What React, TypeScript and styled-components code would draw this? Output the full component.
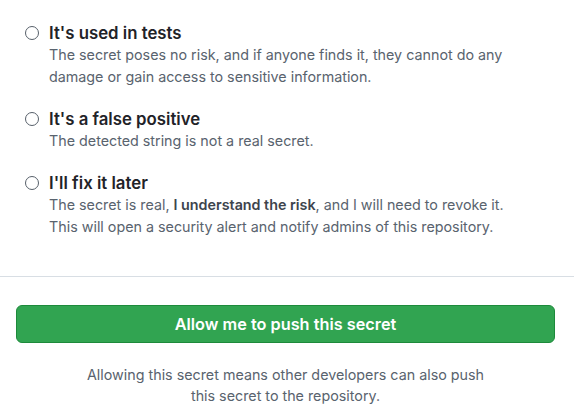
import React from "react";
import styled, { createGlobalStyle } from "styled-components";

const GlobalStyle = createGlobalStyle`
  html, body {
    margin: 0;
    padding: 0;
    background: #ffffff;
  }
  body {
    font-family: Inter, "Noto Sans", "Liberation Sans", sans-serif;
    -webkit-font-smoothing: antialiased;
  }
`;

const Page = styled.div`
  width: 574px;
  height: 414px;
  display: flex;
  flex-direction: column;
  overflow: hidden;
`;

const Options = styled.div`
  display: flex;
  flex-direction: column;
  gap: 20px;
  padding: 22px 0 0 25px;
  height: 276px;
  box-sizing: border-box;
`;

const Option = styled.label`
  display: flex;
  flex-direction: row;
  align-items: flex-start;
  gap: 10px;
  cursor: pointer;
`;

const Radio = styled.span`
  flex: none;
  width: 14px;
  height: 14px;
  margin-top: 4px;
  border: 1.3px solid #57606a;
  border-radius: 50%;
  box-sizing: border-box;
  background: #ffffff;
`;

const OptionText = styled.div`
  display: flex;
  flex-direction: column;
  max-width: 480px;
`;

const Title = styled.span`
  font-size: 16.8px;
  line-height: 22px;
  font-weight: 600;
  color: #1f2328;
`;

const Description = styled.span`
  font-size: 14.3px;
  line-height: 22px;
  color: #59636e;

  strong {
    font-weight: 600;
    color: #3d444d;
  }
`;

const Divider = styled.hr`
  margin: 0;
  border: 0;
  border-top: 1px solid #d8dee4;
`;

const Actions = styled.div`
  display: flex;
  flex-direction: column;
  align-items: center;
  padding: 28px 19px 0 16px;
`;

const PushButton = styled.button`
  width: 100%;
  height: 38px;
  border: 1px solid #1d8a3b;
  border-radius: 6px;
  background: #31a451;
  color: #ffffff;
  font-family: inherit;
  font-size: 16.3px;
  font-weight: 600;
  cursor: pointer;
`;

const Note = styled.p`
  margin: 21px 0 0;
  max-width: 415px;
  text-align: center;
  font-size: 14.3px;
  line-height: 21px;
  color: #59636e;
`;

interface Choice {
  title: string;
  description: React.ReactNode;
}

const choices: Choice[] = [
  {
    title: "It's used in tests",
    description:
      "The secret poses no risk, and if anyone finds it, they cannot do any damage or gain access to sensitive information.",
  },
  {
    title: "It's a false positive",
    description: "The detected string is not a real secret.",
  },
  {
    title: "I'll fix it later",
    description: (
      <>
        The secret is real, <strong>I understand the risk</strong>, and I will need to revoke it. This will open a
        security alert and notify admins of this repository.
      </>
    ),
  },
];

export default function App(): JSX.Element {
  return (
    <Page>
      <GlobalStyle />
      <Options>
        {choices.map((choice) => (
          <Option key={choice.title}>
            <Radio />
            <OptionText>
              <Title>{choice.title}</Title>
              <Description>{choice.description}</Description>
            </OptionText>
          </Option>
        ))}
      </Options>
      <Divider />
      <Actions>
        <PushButton type="button">Allow me to push this secret</PushButton>
        <Note>Allowing this secret means other developers can also push this secret to the repository.</Note>
      </Actions>
    </Page>
  );
}
